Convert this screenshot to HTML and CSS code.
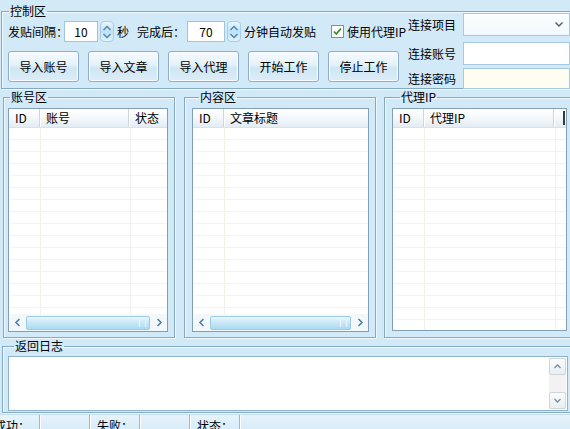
FILE: index.html
```html
<!DOCTYPE html>
<html lang="zh-CN">
<head>
  <meta charset="UTF-8">
  <title>自动发贴</title>
  <link rel="stylesheet" href="styles.css">
</head>
<body>
  <div class="app">

    <fieldset class="group ctrl">
      <legend>控制区</legend>
      <div class="ctrl-inner">
        <div class="ctrl-left">
          <div class="row">
            <span class="lbl w56">发贴间隔：</span>
            <div class="num w34">10</div>
            <div class="spin">
              <svg width="12" height="9" viewBox="0 0 12 9"><path d="M2.5 7 L6 3.5 L9.5 7" fill="none" stroke="#4d86b4" stroke-width="1.5"/></svg>
              <svg width="12" height="9" viewBox="0 0 12 9"><path d="M2.5 2 L6 5.5 L9.5 2" fill="none" stroke="#4d86b4" stroke-width="1.5"/></svg>
            </div>
            <span class="lbl sec">秒</span>
            <span class="lbl w50 after">完成后：</span>
            <div class="num w38">70</div>
            <div class="spin">
              <svg width="12" height="9" viewBox="0 0 12 9"><path d="M2.5 7 L6 3.5 L9.5 7" fill="none" stroke="#4d86b4" stroke-width="1.5"/></svg>
              <svg width="12" height="9" viewBox="0 0 12 9"><path d="M2.5 2 L6 5.5 L9.5 2" fill="none" stroke="#4d86b4" stroke-width="1.5"/></svg>
            </div>
            <span class="lbl mins">分钟自动发贴</span>
            <span class="check">
              <svg width="13" height="13" viewBox="0 0 13 13"><rect x="0.5" y="0.5" width="12" height="12" fill="#fff" stroke="#7f8f9c"/><path d="M3 6.5 L5.3 9 L10 3.5" fill="none" stroke="#3c8a2e" stroke-width="1.8"/></svg>
            </span>
            <span class="lbl proxy">使用代理IP</span>
          </div>
          <div class="row buttons">
            <button class="btn">导入账号</button>
            <button class="btn">导入文章</button>
            <button class="btn">导入代理</button>
            <button class="btn">开始工作</button>
            <button class="btn">停止工作</button>
          </div>
        </div>

        <div class="ctrl-right">
          <div class="conn first">
            <span class="lbl conn-lbl lbl-low">连接项目</span>
            <div class="combo">
              <svg width="10" height="7" viewBox="0 0 10 7"><path d="M1.5 1.5 L5 5 L8.5 1.5" fill="none" stroke="#55616b" stroke-width="1.5"/></svg>
            </div>
          </div>
          <div class="conn second">
            <span class="lbl conn-lbl">连接账号</span>
            <div class="text"></div>
          </div>
          <div class="conn third">
            <span class="lbl conn-lbl">连接密码</span>
            <div class="text pwd"></div>
          </div>
        </div>
      </div>
    </fieldset>

    <div class="lists">
      <fieldset class="group g-acc">
        <legend>账号区</legend>
        <div class="lv">
          <div class="lv-head">
            <span class="hcol w31">ID</span>
            <span class="hcol w89">账号</span>
            <span class="hcol grow">状态</span>
          </div>
          <div class="lv-body">
            <div class="bcol w31"></div>
            <div class="bcol w89"></div>
            <div class="bcol grow"></div>
          </div>
          <div class="hscroll">
            <span class="arrow"><svg width="8" height="9" viewBox="0 0 8 9"><path d="M5.5 1 L2 4.5 L5.5 8" fill="none" stroke="#4f7fa6" stroke-width="1.6"/></svg></span>
            <span class="thumb"><i></i></span>
            <span class="arrow"><svg width="8" height="9" viewBox="0 0 8 9"><path d="M2.5 1 L6 4.5 L2.5 8" fill="none" stroke="#4f7fa6" stroke-width="1.6"/></svg></span>
          </div>
        </div>
      </fieldset>

      <fieldset class="group g-art">
        <legend>内容区</legend>
        <div class="lv">
          <div class="lv-head">
            <span class="hcol w31">ID</span>
            <span class="hcol grow">文章标题</span>
          </div>
          <div class="lv-body">
            <div class="bcol w31"></div>
            <div class="bcol grow"></div>
          </div>
          <div class="hscroll">
            <span class="arrow"><svg width="8" height="9" viewBox="0 0 8 9"><path d="M5.5 1 L2 4.5 L5.5 8" fill="none" stroke="#4f7fa6" stroke-width="1.6"/></svg></span>
            <span class="thumb"><i></i></span>
            <span class="arrow"><svg width="8" height="9" viewBox="0 0 8 9"><path d="M2.5 1 L6 4.5 L2.5 8" fill="none" stroke="#4f7fa6" stroke-width="1.6"/></svg></span>
          </div>
        </div>
      </fieldset>

      <fieldset class="group g-ip">
        <legend>代理IP</legend>
        <div class="lv">
          <div class="lv-head">
            <span class="hcol w31">ID</span>
            <span class="hcol w130">代理IP</span>
            <span class="hcol grow cut"></span>
          </div>
          <div class="lv-body">
            <div class="bcol w31"></div>
            <div class="bcol w130"></div>
            <div class="bcol grow"></div>
          </div>
        </div>
      </fieldset>
    </div>

    <fieldset class="group log">
      <legend>返回日志</legend>
      <div class="log-box">
        <div class="vscroll">
          <span class="vbtn"><svg width="9" height="7" viewBox="0 0 9 7"><path d="M1.5 5 L4.5 2 L7.5 5" fill="none" stroke="#6f8ea6" stroke-width="1.3"/></svg></span>
          <span class="vbtn"><svg width="9" height="7" viewBox="0 0 9 7"><path d="M1.5 2 L4.5 5 L7.5 2" fill="none" stroke="#6f8ea6" stroke-width="1.3"/></svg></span>
        </div>
      </div>
    </fieldset>

    <div class="status">
      <span class="cell first-cell">成功：</span>
      <span class="cell"></span>
      <span class="cell">失败：</span>
      <span class="cell"></span>
      <span class="cell">状态：</span>
    </div>

  </div>
</body>
</html>
```

FILE: styles.css
```css
html, body {
  margin: 0;
  padding: 0;
  overflow: hidden;
}

body {
  width: 570px;
  height: 429px;
  background: #d2eaf8;
  font-family: 'Noto Sans CJK SC', 'DejaVu Sans', sans-serif;
  font-size: 12px;
  color: #000;
}

.app {
  width: 580px;
  padding-top: 4px;
}

/* group boxes */
.group {
  margin: 0;
  padding: 0;
  border: 1px solid #86aac4;
  box-shadow: inset 1px 1px 0 #eef8fe, 1px 1px 0 #eef8fe;
  box-sizing: border-box;
  min-width: 0;
}
.group legend {
  padding: 0 1px;
  line-height: 14px;
  height: 14px;
}

.lbl {
  white-space: nowrap;
  line-height: 21px;
}

/* control area */
.ctrl {
  margin-left: 1px;
  width: 578px;
  height: 85px;
}
.ctrl legend { margin-left: 7px; }

.ctrl-inner {
  display: flex;
  padding-left: 6px;
}
.ctrl-left {
  width: 400px;
  padding-top: 3px;
}
.row {
  display: flex;
  align-items: center;
  height: 21px;
}

.w56 { width: 56px; }
.w50 { width: 50px; }
.sec { margin-left: 3px; width: 12px; }
.after { margin-left: 8px; }
.mins { margin-left: 3px; }
.proxy { margin-left: 3px; }

.num {
  height: 21px;
  box-sizing: border-box;
  border: 1px solid #9ec4de;
  background: #fff;
  text-align: center;
  line-height: 19px;
}
.w34 { width: 34px; }
.w38 { width: 38px; }

.spin {
  width: 14px;
  height: 21px;
  margin-left: 2px;
  box-sizing: border-box;
  border: 1px solid #a9cde6;
  border-radius: 4px;
  background: linear-gradient(#eaf6fd, #bfe2f6 50%, #e2f3fc);
  display: flex;
  flex-direction: column;
  align-items: center;
  justify-content: center;
}
.spin svg { display: block; }

.check {
  display: flex;
  margin-left: 15px;
}

.buttons {
  height: 31px;
  margin-top: 9px;
  gap: 9px;
}
.btn {
  width: 71px;
  height: 31px;
  padding: 0;
  font: inherit;
  color: #000;
  border: 1px solid #8eaec6;
  border-radius: 3px;
  background: linear-gradient(#f7fbfe, #e3f1fa 45%, #cfe6f4 55%, #dcedf8);
  box-shadow: inset 0 0 0 1px #f9fcfe;
}

.ctrl-right {
  margin-top: -5px;
}
.conn {
  display: flex;
  align-items: flex-start;
  height: 23px;
}
.conn.second { margin-top: 6px; }
.conn.third { margin-top: 3px; height: 21px; }
.conn-lbl {
  width: 55px;
  line-height: 21px;
}
.second .conn-lbl { line-height: 23px; }
.lbl-low { margin-top: 5px; line-height: 14px; }

.combo, .text {
  width: 107px;
  height: 23px;
  box-sizing: border-box;
  border: 1px solid #a7c9e1;
  background: #fff;
}
.combo {
  display: flex;
  align-items: center;
  justify-content: flex-end;
  padding-right: 5px;
  background: linear-gradient(#fcfeff, #f1f8fd);
}
.text.pwd {
  height: 21px;
  background: #fffdf2;
}

/* list areas */
.lists {
  display: flex;
  margin-top: 1px;
}
.lists .group {
  height: 248px;
  padding-top: 4px;
  padding-bottom: 5px;
  display: flex;
  flex-direction: column;
}
.g-acc {
  margin-left: 3px;
  width: 172px;
  padding-left: 4px;
  padding-right: 6px;
}
.g-acc legend { margin-left: 2px; }
.g-art {
  margin-left: 9px;
  width: 192px;
  padding-left: 7px;
  padding-right: 6px;
}
.g-art legend { margin-left: 7px; }
.g-ip {
  margin-left: 8px;
  width: 190px;
  padding-left: 7px;
  padding-right: 6px;
}
.g-ip legend { margin-left: 8px; }

.lv {
  flex: 1;
  display: flex;
  flex-direction: column;
  border: 1px solid #819fb6;
  background: #fff;
  overflow: hidden;
}
.g-ip .lv { margin-bottom: 1px; }

.lv-head {
  display: flex;
  height: 18px;
  background: linear-gradient(#ffffff, #f4f8fb 50%, #e3ecf4);
  border-bottom: 1px solid #d9e2ea;
  flex: none;
}
.hcol {
  box-sizing: border-box;
  padding-left: 6px;
  line-height: 18px;
  border-right: 1px solid #d1d6db;
  box-shadow: 1px 0 0 #fff;
  white-space: nowrap;
}
.hcol.grow { border-right: none; box-shadow: none; }
.hcol.cut {
  flex: none;
  width: 12px;
  padding: 0;
  border-left: 1px solid #d1d6db;
  border-right: 2px solid #3a3a3a;
  margin-left: -1px;
  height: 14px;
  margin-top: 2px;
}

.w31 { width: 31px; flex: none; }
.w89 { width: 89px; flex: none; }
.w130 { width: 130px; flex: none; }
.grow { flex: 1; }

.lv-body {
  flex: 1;
  display: flex;
}
.bcol {
  border-right: 1px solid #f3efeb;
  background: repeating-linear-gradient(#fff 0, #fff 11px, #f6f2ef 11px, #f6f2ef 12px);
}
.bcol.grow { border-right: none; }

.hscroll {
  flex: none;
  height: 17px;
  display: flex;
  align-items: center;
  padding: 0 2px;
  background: #f3f8fb;
}
.arrow {
  width: 13px;
  height: 15px;
  display: flex;
  align-items: center;
  justify-content: center;
}
.thumb {
  flex: 1;
  height: 14px;
  margin: 0 2px;
  box-sizing: border-box;
  border: 1px solid #9dcbe5;
  border-radius: 2px;
  background: linear-gradient(#eaf6fd, #c6e7f7 50%, #abdaf1);
  display: flex;
  justify-content: flex-end;
  align-items: center;
  padding-right: 3px;
}
.thumb i {
  width: 5px;
  height: 8px;
  border-left: 1px solid #e8f5fc;
  border-right: 1px solid #e8f5fc;
}

/* log */
.log {
  margin-top: 1px;
  margin-left: 2px;
  width: 578px;
  height: 74px;
  padding: 3px 0 1px 5px;
}
.log legend { margin-left: 6px; }
.log-box {
  width: 560px;
  height: 55px;
  box-sizing: border-box;
  border: 1px solid #8eb3cd;
  background: #fff;
  display: flex;
  justify-content: flex-end;
  padding: 1px 1px 1px 0;
}
.vscroll {
  width: 17px;
  display: flex;
  flex-direction: column;
  justify-content: space-between;
  background: #f3f1f1;
}
.vbtn {
  height: 17px;
  box-sizing: border-box;
  border: 1px solid #cdd6dc;
  border-radius: 2px;
  background: linear-gradient(#fbfcfd, #e9eef2);
  display: flex;
  align-items: center;
  justify-content: center;
}

/* status bar */
.status {
  margin-top: 1px;
  height: 16px;
  display: flex;
  background: linear-gradient(#e6f3fb, #d6ecf8);
  border-top: 1px solid #c5dcea;
}
.cell {
  width: 49px;
  box-sizing: border-box;
  padding-left: 6px;
  padding-top: 4px;
  line-height: 14px;
  border-right: 1px solid #9fb9cc;
  box-shadow: 1px 0 0 #fff;
  white-space: nowrap;
  margin-right: 1px;
}
.first-cell {
  width: 40px;
  padding-left: 0;
  text-indent: -6px;
}
```
